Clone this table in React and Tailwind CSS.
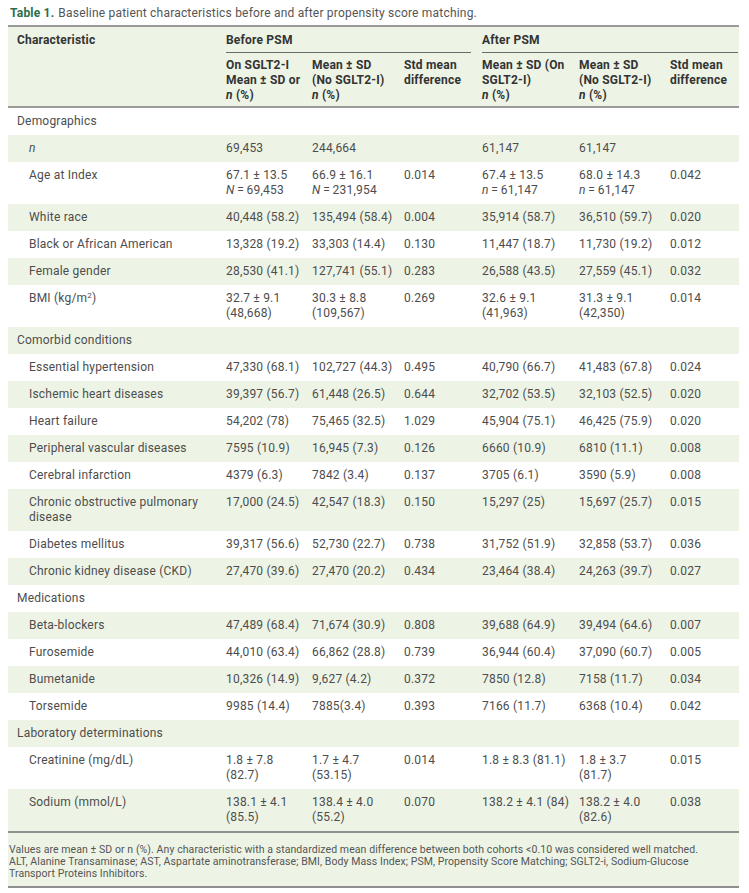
import React from "react";

const GREEN = "bg-[#edf4e6]";

const I = ({ children }) => <i>{children}</i>;

const rows = [
  { section: "Demographics" },
  { label: <I>n</I>, v: ["69,453", "244,664", "", "61,147", "61,147", ""] },
  {
    label: "Age at Index",
    v: [
      ["67.1 ± 13.5", <><I>N</I>{"\u2009=\u2009"}69,453</>],
      ["66.9 ± 16.1", <><I>N</I>{"\u2009=\u2009"}231,954</>],
      "0.014",
      ["67.4 ± 13.5", <><I>n</I>{"\u2009=\u2009"}61,147</>],
      ["68.0 ± 14.3", <><I>n</I>{"\u2009=\u2009"}61,147</>],
      "0.042",
    ],
  },
  { label: "White race", v: ["40,448 (58.2)", "135,494 (58.4)", "0.004", "35,914 (58.7)", "36,510 (59.7)", "0.020"] },
  { label: "Black or African American", v: ["13,328 (19.2)", "33,303 (14.4)", "0.130", "11,447 (18.7)", "11,730 (19.2)", "0.012"] },
  { label: "Female gender", v: ["28,530 (41.1)", "127,741 (55.1)", "0.283", "26,588 (43.5)", "27,559 (45.1)", "0.032"] },
  {
    label: <>BMI (kg/m<sup className="text-[8px]">2</sup>)</>,
    v: [["32.7 ± 9.1", "(48,668)"], ["30.3 ± 8.8", "(109,567)"], "0.269", ["32.6 ± 9.1", "(41,963)"], ["31.3 ± 9.1", "(42,350)"], "0.014"],
  },
  { section: "Comorbid conditions" },
  { label: "Essential hypertension", v: ["47,330 (68.1)", "102,727 (44.3)", "0.495", "40,790 (66.7)", "41,483 (67.8)", "0.024"] },
  { label: "Ischemic heart diseases", v: ["39,397 (56.7)", "61,448 (26.5)", "0.644", "32,702 (53.5)", "32,103 (52.5)", "0.020"] },
  { label: "Heart failure", v: ["54,202 (78)", "75,465 (32.5)", "1.029", "45,904 (75.1)", "46,425 (75.9)", "0.020"] },
  { label: "Peripheral vascular diseases", v: ["7595 (10.9)", "16,945 (7.3)", "0.126", "6660 (10.9)", "6810 (11.1)", "0.008"] },
  { label: "Cerebral infarction", v: ["4379 (6.3)", "7842 (3.4)", "0.137", "3705 (6.1)", "3590 (5.9)", "0.008"] },
  { label: ["Chronic obstructive pulmonary", "disease"], v: ["17,000 (24.5)", "42,547 (18.3)", "0.150", "15,297 (25)", "15,697 (25.7)", "0.015"] },
  { label: "Diabetes mellitus", v: ["39,317 (56.6)", "52,730 (22.7)", "0.738", "31,752 (51.9)", "32,858 (53.7)", "0.036"] },
  { label: "Chronic kidney disease (CKD)", v: ["27,470 (39.6)", "27,470 (20.2)", "0.434", "23,464 (38.4)", "24,263 (39.7)", "0.027"] },
  { section: "Medications" },
  { label: "Beta-blockers", v: ["47,489 (68.4)", "71,674 (30.9)", "0.808", "39,688 (64.9)", "39,494 (64.6)", "0.007"] },
  { label: "Furosemide", v: ["44,010 (63.4)", "66,862 (28.8)", "0.739", "36,944 (60.4)", "37,090 (60.7)", "0.005"] },
  { label: "Bumetanide", v: ["10,326 (14.9)", "9,627 (4.2)", "0.372", "7850 (12.8)", "7158 (11.7)", "0.034"] },
  { label: "Torsemide", v: ["9985 (14.4)", "7885(3.4)", "0.393", "7166 (11.7)", "6368 (10.4)", "0.042"] },
  { section: "Laboratory determinations" },
  {
    label: "Creatinine (mg/dL)",
    v: [["1.8 ± 7.8", "(82.7)"], ["1.7 ± 4.7", "(53.15)"], "0.014", "1.8 ± 8.3 (81.1)", ["1.8 ± 3.7", "(81.7)"], "0.015"],
  },
  {
    label: "Sodium (mmol/L)",
    v: [["138.1 ± 4.1", "(85.5)"], ["138.4 ± 4.0", "(55.2)"], "0.070", "138.2 ± 4.1 (84)", ["138.2 ± 4.0", "(82.6)"], "0.038"],
  },
];

function Lines({ value }) {
  if (Array.isArray(value)) {
    return value.map((line, i) => (
      <div key={i} className="whitespace-nowrap">
        {line}
      </div>
    ));
  }
  return <div className="whitespace-nowrap">{value}</div>;
}

function HeadCell({ lines }) {
  return (
    <th className="pl-[9px] pr-[2px] pt-[5px] pb-[3px] text-left align-top font-bold border-b-2 border-[#9a9a9a]">
      {lines.map((l, i) => (
        <div key={i} className="whitespace-nowrap">
          {l}
        </div>
      ))}
    </th>
  );
}

export default function App() {
  return (
    <div className="w-[749px] min-h-[893px] bg-white pt-[5px] pl-[8px] pr-[10px] font-['Roboto','Liberation_Sans',sans-serif] text-[#4d4d4d]">
      <div className="pl-[2px] text-[12px] leading-[16px] tracking-[0.2px] text-[#555]">
        <span className="font-bold text-[#2b6e4d]">Table 1.</span>
        <span className="ml-[4px]">Baseline patient characteristics before and after propensity score matching.</span>
      </div>

      <table className="mt-[4px] w-[731px] table-fixed border-collapse text-[12px] leading-[15px] tracking-[0.2px]">
        <colgroup>
          <col className="w-[209px]" />
          <col className="w-[86px]" />
          <col className="w-[92px]" />
          <col className="w-[78px]" />
          <col className="w-[97px]" />
          <col className="w-[91px]" />
          <col className="w-[78px]" />
        </colgroup>
        <thead className={`${GREEN} text-[#333]`}>
          <tr>
            <th
              rowSpan={2}
              className="pl-[9px] pt-[6px] text-left align-top font-bold border-t-2 border-b-2 border-[#9a9a9a]"
            >
              Characteristic
            </th>
            <th colSpan={3} className="pl-[9px] pr-[2px] pt-[6px] text-left align-top font-bold border-t-2 border-[#9a9a9a]">
              <div className="pb-[4px] border-b border-[#6b6b6b]">Before PSM</div>
            </th>
            <th colSpan={3} className="pl-[9px] pr-[1px] pt-[6px] text-left align-top font-bold border-t-2 border-[#9a9a9a]">
              <div className="pb-[4px] border-b border-[#6b6b6b]">After PSM</div>
            </th>
          </tr>
          <tr>
            <HeadCell lines={["On SGLT2-I", "Mean ± SD or", <><I>n</I> (%)</>]} />
            <HeadCell lines={["Mean ± SD", "(No SGLT2-I)", <><I>n</I> (%)</>]} />
            <HeadCell lines={["Std mean", "difference"]} />
            <HeadCell lines={["Mean ± SD (On", "SGLT2-I)", <><I>n</I> (%)</>]} />
            <HeadCell lines={["Mean ± SD", "(No SGLT2-I)", <><I>n</I> (%)</>]} />
            <HeadCell lines={["Std mean", "difference"]} />
          </tr>
        </thead>
        <tbody>
          {rows.map((row, index) => {
            const bg = index % 2 === 1 ? GREEN : "bg-white";
            if (row.section) {
              return (
                <tr key={index} className={bg}>
                  <td colSpan={7} className="pl-[9px] pt-[6px] pb-[6px] align-top">
                    {row.section}
                  </td>
                </tr>
              );
            }
            return (
              <tr key={index} className={bg}>
                <td className="pl-[21px] py-[6px] align-top">
                  <Lines value={row.label} />
                </td>
                {row.v.map((val, i) => (
                  <td key={i} className="pl-[9px] py-[6px] align-top">
                    <Lines value={val} />
                  </td>
                ))}
              </tr>
            );
          })}
        </tbody>
      </table>

      <div
        className={`w-[731px] ${GREEN} border-t-2 border-b-2 border-[#8f8f8f] pl-[1px] pt-[11px] pb-[6px] text-[10.5px] leading-[12px] tracking-[0.08px] text-[#555]`}
      >
        <div className="whitespace-nowrap">
          Values are mean ± SD or n (%). Any characteristic with a standardized mean difference between both cohorts &lt;0.10 was considered well matched.
        </div>
        <div className="whitespace-nowrap">
          ALT, Alanine Transaminase; AST, Aspartate aminotransferase; BMI, Body Mass Index; PSM, Propensity Score Matching; SGLT2-i, Sodium-Glucose
        </div>
        <div className="whitespace-nowrap">Transport Proteins Inhibitors.</div>
      </div>
    </div>
  );
}
